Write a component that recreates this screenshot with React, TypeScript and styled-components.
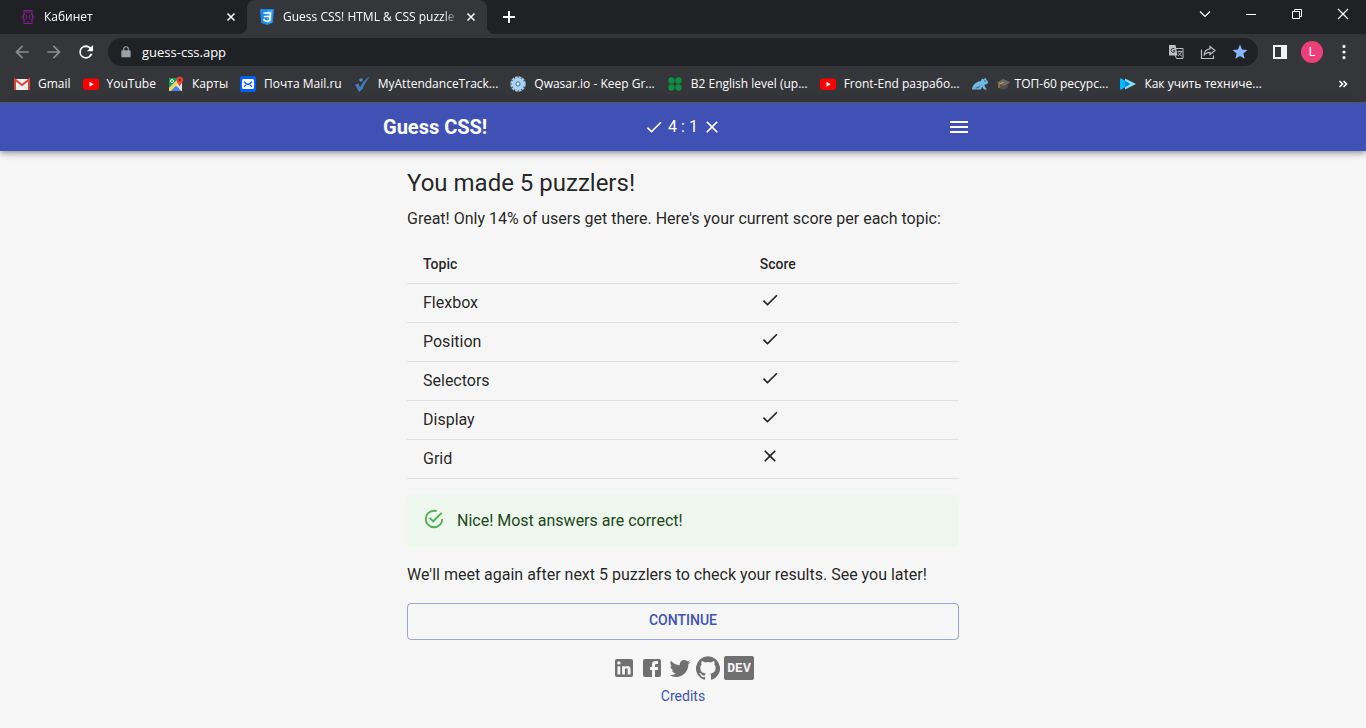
import React from 'react';
import styled, { createGlobalStyle } from 'styled-components';

const uiFont = '"Open Sans", "Noto Sans", sans-serif';
const tabStrip = '#202124';
const chrome = '#35363a';
const primary = '#3f51b5';

const GlobalStyle = createGlobalStyle`
  *, *::before, *::after { box-sizing: border-box; }
  body {
    margin: 0;
    background: #f6f6f6;
    color: rgba(0, 0, 0, 0.87);
    font-family: Roboto, sans-serif;
    font-size: 16px;
    line-height: 24px;
  }
  svg { display: block; flex: none; }
  button { font-family: inherit; cursor: pointer; }
`;

/* ---------- browser frame ---------- */

const BrowserFrame = styled.div`
  background: ${chrome};
  color: #fff;
  font-family: ${uiFont};
  font-size: 12px;
  line-height: 16px;
  border-bottom: 1px solid #5c5d60;
`;

const TabStrip = styled.div`
  display: flex;
  height: 34px;
  padding-left: 7px;
  background: ${tabStrip};
`;

const Tab = styled.div<{ $active?: boolean }>`
  position: relative;
  display: flex;
  align-items: center;
  gap: 8px;
  width: 240px;
  padding: 0 8px 0 12px;
  border-radius: 8px 8px 0 0;
  background: ${(p) => (p.$active ? chrome : 'transparent')};

  &::before,
  &::after {
    content: ${(p) => (p.$active ? '""' : 'none')};
    position: absolute;
    bottom: 0;
    width: 8px;
    height: 8px;
  }
  &::before {
    left: -8px;
    background: radial-gradient(circle at 0 0, transparent 8px, ${chrome} 8px);
  }
  &::after {
    right: -8px;
    background: radial-gradient(circle at 100% 0, transparent 8px, ${chrome} 8px);
  }
`;

const TabTitle = styled.span`
  flex: 1;
  overflow: hidden;
  white-space: nowrap;
  mask-image: linear-gradient(to right, #000 160px, transparent 176px);
`;

const GlyphButton = styled.button<{ $size?: number }>`
  display: flex;
  align-items: center;
  justify-content: center;
  flex: none;
  width: ${(p) => p.$size ?? 32}px;
  height: ${(p) => p.$size ?? 32}px;
  padding: 0;
  border: 0;
  background: none;
  color: inherit;
`;

const NavButton = styled(GlyphButton)<{ $dim?: boolean }>`
  color: ${(p) => (p.$dim ? '#8b8c8f' : '#fff')};
`;

const StarButton = styled(GlyphButton)`
  color: #8ab4f8;
`;

const NewTab = styled(GlyphButton)`
  margin: 3px 0 0 8px;
`;

const WindowControls = styled.div`
  display: flex;
  margin-left: auto;
`;

const WindowButton = styled(GlyphButton)`
  width: 46px;
  height: 28px;
`;

const Toolbar = styled.div`
  display: flex;
  align-items: center;
  height: 36px;
  padding: 0 6px;
`;

const AddressBar = styled.div`
  display: flex;
  flex: 1;
  align-items: center;
  height: 28px;
  margin: 0 6px;
  padding: 0 2px 0 11px;
  border-radius: 14px;
  background: ${tabStrip};
  color: #9aa0a6;
`;

const AddressInput = styled.input`
  flex: 1;
  min-width: 0;
  padding: 0 0 0 9px;
  border: 0;
  outline: 0;
  background: none;
  color: #fff;
  font-family: ${uiFont};
  font-size: 13px;
`;

const Avatar = styled.span`
  width: 22px;
  height: 22px;
  border-radius: 50%;
  background: #ec407a;
  color: #fff;
  font-family: Roboto, sans-serif;
  font-size: 12px;
  line-height: 22px;
  text-align: center;
`;

const Bookmarks = styled.nav`
  display: flex;
  align-items: center;
  gap: 12px;
  height: 32px;
  padding: 0 15px 4px 14px;
`;

const Bookmark = styled.a`
  display: flex;
  align-items: center;
  gap: 8px;
  color: #fff;
  text-decoration: none;
  white-space: nowrap;
`;

const BookmarkLabel = styled.span`
  display: flex;
  align-items: center;
  gap: 4px;
`;

const MoreButton = styled(GlyphButton)`
  margin-left: auto;
`;

/* ---------- page ---------- */

const AppBar = styled.header`
  position: relative;
  background: ${primary};
  color: #fff;
  box-shadow: 0 2px 4px -1px rgba(0, 0, 0, 0.2), 0 4px 5px 0 rgba(0, 0, 0, 0.14),
    0 1px 10px 0 rgba(0, 0, 0, 0.12);
`;

const AppBarInner = styled.div`
  display: grid;
  grid-template-columns: 1fr auto 1fr;
  align-items: center;
  max-width: 600px;
  height: 48px;
  margin: 0 auto;
`;

const Brand = styled.span`
  font-size: 20px;
  font-weight: 700;
`;

const ScoreTotal = styled.span`
  display: flex;
  align-items: center;
  gap: 4px;
`;

const MenuButton = styled(GlyphButton)`
  justify-self: end;
`;

const Content = styled.main`
  max-width: 600px;
  margin: 0 auto;
  padding: 16px 24px;
`;

const Heading = styled.h1`
  margin: 0 0 8px;
  font-size: 24px;
  font-weight: 400;
  line-height: 32px;
`;

const Text = styled.p`
  margin: 0 0 16px;
`;

const ScoreTable = styled.table`
  width: 100%;
  margin-bottom: 16px;
  border-collapse: separate;
  border-spacing: 0;
  table-layout: fixed;
`;

const HeadCell = styled.th<{ $wide?: boolean }>`
  width: ${(p) => (p.$wide ? '61%' : 'auto')};
  height: 37px;
  padding: 0 16px 2px;
  border-bottom: 1px solid #e0e0e0;
  font-size: 14px;
  font-weight: 500;
  text-align: left;
`;

const Cell = styled.td<{ $top?: boolean }>`
  height: 39px;
  padding: ${(p) => (p.$top ? '6px 16px' : '0 16px')};
  border-bottom: 1px solid #e0e0e0;
  vertical-align: ${(p) => (p.$top ? 'top' : 'middle')};
`;

const Alert = styled.div`
  display: flex;
  gap: 12px;
  margin-bottom: 16px;
  padding: 14px 16px;
  border-radius: 4px;
  background: #edf7ed;
  color: #1e4620;

  svg { color: #4caf50; margin-top: -1px; }
`;

const ContinueButton = styled.button`
  display: block;
  width: 100%;
  height: 37px;
  margin-bottom: 16px;
  padding: 0 16px 4px;
  border: 1px solid rgba(63, 81, 181, 0.5);
  border-radius: 4px;
  background: none;
  color: ${primary};
  font-size: 14px;
  font-weight: 500;
  text-transform: uppercase;
`;

const Footer = styled.footer`
  display: flex;
  flex-direction: column;
  align-items: center;
  gap: 6px;
  font-size: 14px;
  line-height: 20px;
`;

const Socials = styled.div`
  display: flex;
  gap: 4px;
`;

const SocialLink = styled.a`
  color: #707070;
  text-decoration: none;
`;

const DevBadge = styled(SocialLink)`
  width: 30px;
  height: 24px;
  border-radius: 2px;
  background: #707070;
  color: #f6f6f6;
  font-family: "Liberation Mono", monospace;
  font-size: 13px;
  font-weight: 700;
  line-height: 26px;
  text-align: center;
`;

const CreditsLink = styled.a`
  color: ${primary};
  text-decoration: none;
`;

/* ---------- icons ---------- */

const Icon = ({ d, size = 24 }: { d: string; size?: number }) => (
  <svg width={size} height={size} viewBox="0 0 24 24" fill="currentColor" aria-hidden="true">
    <path d={d} />
  </svg>
);

const paths = {
  check: 'M9 16.17L4.83 12l-1.42 1.41L9 19 21 7l-1.41-1.41z',
  close:
    'M19 6.41L17.59 5 12 10.59 6.41 5 5 6.41 10.59 12 5 17.59 6.41 19 12 13.41 17.59 19 19 17.59 13.41 12z',
  menu: 'M3 18h18v-2H3v2zm0-5h18v-2H3v2zm0-7v2h18V6H3z',
  success:
    'M20,12A8,8 0 0,1 12,20A8,8 0 0,1 4,12A8,8 0 0,1 12,4C12.76,4 13.5,4.11 14.2,4.31L15.77,2.74C14.61,2.26 13.34,2 12,2A10,10 0 0,0 2,12A10,10 0 0,0 12,22A10,10 0 0,0 22,12M7.91,10.08L6.5,11.5L11,16L21,6L19.59,4.58L11,13.17L7.91,10.08Z',
  back: 'M20 11H7.83l5.59-5.59L12 4l-8 8 8 8 1.41-1.41L7.83 13H20v-2z',
  forward: 'M12 4l-1.41 1.41L16.17 11H4v2h12.17l-5.58 5.59L12 20l8-8z',
  reload:
    'M17.65 6.35A7.95 7.95 0 0 0 12 4a8 8 0 1 0 7.73 10h-2.6A5.8 5.8 0 1 1 12 6.2c1.66 0 3.1.69 4.15 1.75L13 11h7.5V3.5z',
  lock: 'M18.500 9H17V7A5 5 0 0 0 7 7v2H5.500C4.700 9 4 9.700 4 10.500v9c0 .8.7 1.500 1.500 1.500h13c.8 0 1.500-.7 1.500-1.500v-9c0-.8-.7-1.500-1.500-1.500zM9 9V7a3 3 0 0 1 6 0v2z',
  star: 'M12 17.27L18.18 21l-1.64-7.03L22 9.24l-7.19-.61L12 2 9.19 8.63 2 9.24l5.46 4.73L5.82 21z',
  dots: 'M12 6.100a2.400 2.400 0 1 0 0-4.800 2.400 2.400 0 0 0 0 4.800zm0 8.300a2.400 2.400 0 1 0 0-4.800 2.400 2.400 0 0 0 0 4.800zm0 8.300a2.400 2.400 0 1 0 0-4.800 2.400 2.400 0 0 0 0 4.800z',
  linkedin:
    'M19 3a2 2 0 0 1 2 2v14a2 2 0 0 1-2 2H5a2 2 0 0 1-2-2V5a2 2 0 0 1 2-2h14m-.5 15.5v-5.3a3.26 3.26 0 0 0-3.26-3.26c-.85 0-1.84.52-2.32 1.3v-1.110h-2.790v8.370h2.790v-4.930c0-.77.62-1.4 1.390-1.4a1.4 1.4 0 0 1 1.4 1.4v4.930h2.790M6.880 8.560a1.680 1.680 0 0 0 1.680-1.680c0-.93-.75-1.690-1.680-1.690a1.690 1.690 0 0 0-1.690 1.690c0 .93.76 1.680 1.690 1.680m1.390 9.940v-8.370H5.500v8.370h2.770z',
  facebook:
    'M5 3h14a2 2 0 0 1 2 2v14a2 2 0 0 1-2 2H5a2 2 0 0 1-2-2V5a2 2 0 0 1 2-2m13 2h-2.500A3.500 3.500 0 0 0 12 8.500V11h-2v3h2v7h3v-7h3v-3h-3V9a1 1 0 0 1 1-1h2V5z',
  twitter:
    'M22.46 6c-.77.35-1.6.58-2.46.69.88-.53 1.56-1.37 1.88-2.38-.83.5-1.75.85-2.72 1.05C18.37 4.5 17.26 4 16 4c-2.35 0-4.27 1.92-4.27 4.29 0 .34.04.67.11.98C8.28 9.09 5.11 7.38 3 4.79c-.37.63-.58 1.37-.58 2.15 0 1.49.75 2.81 1.91 3.56-.71 0-1.37-.2-1.95-.5v.03c0 2.08 1.48 3.82 3.44 4.21a4.22 4.22 0 0 1-1.93.07 4.28 4.28 0 0 0 4 2.98 8.521 8.521 0 0 1-5.33 1.84c-.34 0-.68-.02-1.02-.06C3.44 20.29 5.7 21 8.12 21 16 21 20.33 14.46 20.33 8.79c0-.19 0-.37-.01-.56.84-.6 1.56-1.36 2.14-2.23z',
  github:
    'M12 .3a12 12 0 0 0-3.8 23.4c.6.1.8-.3.8-.6v-2c-3.3.7-4-1.6-4-1.6-.6-1.4-1.4-1.8-1.4-1.8-1-.7.1-.7.1-.7 1.2 0 1.9 1.2 1.9 1.2 1 1.8 2.8 1.3 3.5 1 0-.8.4-1.3.7-1.6-2.7-.3-5.5-1.3-5.5-6 0-1.2.5-2.3 1.3-3.1-.2-.4-.6-1.6 0-3.2 0 0 1-.3 3.4 1.2a11.5 11.5 0 0 1 6 0c2.3-1.5 3.3-1.2 3.3-1.2.6 1.6.2 2.8 0 3.2.9.8 1.3 1.9 1.3 3.2 0 4.6-2.8 5.6-5.5 5.9.5.4.9 1 .9 2.2v3.3c0 .3.1.7.8.6A12 12 0 0 0 12 .3',
};

const Svg16 = ({ children }: { children: React.ReactNode }) => (
  <svg width="16" height="16" viewBox="0 0 16 16" fill="none" aria-hidden="true">
    {children}
  </svg>
);

const CabinetIcon = () => (
  <svg width="17" height="16" viewBox="0 0 17 16" fill="none" aria-hidden="true">
    <path
      d="M5 5V1.500h8V5M5 11v3.500h8V11M7 1.500v1.500h4V1.500M7.500 13h3M6.500 5.500H4.500V7.500L3.300 8l1.200.5v2h2M11.500 5.500h2V7.500l1.200.5-1.200.5v2h-2M7.500 6v4M10.500 6v4"
      stroke="#7b1f8a"
      strokeWidth="1.200"
    />
  </svg>
);

const Css3Icon = () => (
  <Svg16>
    <path d="M1 0h14l-1.200 14L8 16l-5.800-2z" fill="#1e88e5" />
    <path d="M8 1.200h5.700l-1 12L8 14.800z" fill="#42a5f5" />
    <path d="M4.500 4h7l-.7 7.500L8 12.500l-2.700-1-.1-1.700M4.800 7.500h6" stroke="#fff" strokeWidth="1.600" />
  </Svg16>
);

const GmailIcon = () => (
  <Svg16>
    <path d="M1 3h14v11H1z" fill="#f1f1f1" />
    <path d="M1 14V3.500L8 9l7-5.500V14" stroke="#db4437" strokeWidth="2" />
    <path d="M2.500 14L7 9M13.500 14L9 9" stroke="#ccc" strokeWidth=".7" />
  </Svg16>
);

const YouTubeIcon = () => (
  <Svg16>
    <rect y="2.500" width="16" height="11.500" rx="3" fill="#f00" />
    <path d="M6.500 5.700v5l4.200-2.500z" fill="#fff" />
  </Svg16>
);

const MapsIcon = () => (
  <Svg16>
    <path d="M1 2h13v13H1z" fill="#e8eaed" />
    <path d="M1 2h10L1 12z" fill="#109d58" />
    <path d="M2.500 15L8 9.500l5.500 5.500z" fill="#4285f4" />
    <path d="M1 12.500L9.500 4l1.500 2.500L2.500 15H1z" fill="#ffd54f" />
    <circle cx="4" cy="5" r="1.500" stroke="#fff" />
    <path d="M11.500 11C11 8 8.500 7 8.500 4a3.300 3.300 0 0 1 6.600 0c0 3-3 4-3.600 7z" fill="#ea4335" />
    <circle cx="11.800" cy="4" r="1.200" fill="#8c1d14" />
  </Svg16>
);

const MailIcon = () => (
  <Svg16>
    <rect width="16" height="16" rx="2" fill="#005ff9" />
    <rect x="2" y="3" width="12" height="10" rx="1.500" fill="#fff" />
    <path d="M4 5.800L7 8.300h2l3-2.500M4 10.800l2-1.800M12 10.800L10 9" stroke="#005ff9" strokeWidth="1.400" />
  </Svg16>
);

const AttendanceIcon = () => (
  <Svg16>
    <path d="M1 8.500l3.500-1 1.500 4C8 7 11 3 16 .5 12 5 9.500 10 8.500 13L5 16z" fill="#3f7fbf" />
    <circle cx="7" cy="4" r="1.800" fill="#4a8cc8" />
  </Svg16>
);

const QwasarIcon = () => (
  <Svg16>
    <circle cx="8" cy="8" r="6.800" stroke="#9bc4e6" strokeWidth="2" strokeDasharray="2.800 .8" />
    <circle cx="8" cy="8" r="4.300" stroke="#a9d4f5" strokeWidth="3.800" />
    <circle cx="8" cy="8" r="2" stroke="#5aa6e0" strokeWidth="1" />
    <circle cx="8" cy="8" r="1.400" fill="#eef7ff" />
  </Svg16>
);

const CloverIcon = () => (
  <Svg16>
    <g fill="#0a8f43">
      <circle cx="4.500" cy="4.500" r="3.200" />
      <circle cx="11.500" cy="4.500" r="3.200" />
      <circle cx="4.500" cy="11.500" r="3.200" />
      <circle cx="11.500" cy="11.500" r="3.200" />
    </g>
  </Svg16>
);

const FrogIcon = () => (
  <Svg16>
    <path
      d="M0 13.500c.5-4.500 4-8 9-8.500.2-2.500 2-3 2.700-1.600 1-1.800 2.800-1.200 2.800.6 1.500.6 1.800 2.600 1 3.600-1 .8-2.300.8-3.200 1.200l1.200 3 1.500 1.700h-3L10 10.500l-1 3z"
      fill="#6fb9e8"
    />
    <path d="M3.500 12c2 0 3.500-.7 4.500-2.500" stroke="#35363a" strokeWidth=".8" />
    <circle cx="13" cy="5" r=".7" fill="#35363a" />
  </Svg16>
);

const CapIcon = () => (
  <svg width="15" height="16" viewBox="0 0 15 16" fill="none" aria-hidden="true">
    <path d="M3.500 7v5c2 1.800 6 1.800 8 0V7z" fill="#50504e" />
    <path d="M7.500 3L14.500 6.500l-7 3.500-7-3.500z" fill="#6a6a66" />
    <path d="M7.500 6.500L3 8v4" stroke="#e0a030" />
  </svg>
);

const ChevronsIcon = () => (
  <Svg16>
    <path d="M5 2.500L16 8 5 13.500z" fill="#7fe0ff" />
    <path d="M0 2.500h1.500L10 8l-8.500 5.500H0z" fill="#00b8ff" />
    <path d="M5 4.800L10 8l-5 3.200z" fill="#0a84d8" />
  </Svg16>
);

const TranslateIcon = () => (
  <Svg16>
    <path d="M7 4.500h8v10H8.500L7 11" stroke="#bdc1c6" />
    <path d="M1 1h6.500l2 10.500H1z" fill="#bdc1c6" />
    <path d="M6.500 5A2 2 0 1 0 7 6.800H5" stroke="#35363a" />
    <path d="M9.500 7.500h5M12 6.500v1M13.500 7.500c-.5 2-2 3.500-3.500 4.500M10.500 8.500c1 2 2 3 3.500 3.800" stroke="#bdc1c6" strokeWidth=".9" />
  </Svg16>
);

const ShareIcon = () => (
  <Svg16>
    <path d="M1.500 5.500v9h12v-3" stroke="#bdc1c6" strokeWidth="1.200" />
    <path d="M10 2.500l5 4-5 4V8.300c-3 0-4.800 1-6 3.200.3-4 2.500-6.300 6-6.600z" stroke="#bdc1c6" strokeWidth="1.200" />
  </Svg16>
);

const SidePanelIcon = () => (
  <Svg16>
    <path d="M1 1h14v14H1zM3 3v10h6V3z" fill="#f1f3f4" fillRule="evenodd" />
  </Svg16>
);

const CloseTabIcon = () => (
  <Svg16>
    <path d="M4.500 4.500l7 7M11.500 4.500l-7 7" stroke="#fff" strokeWidth="1.600" />
  </Svg16>
);

/* ---------- data ---------- */

const bookmarks = [
  { label: 'Gmail', icon: <GmailIcon /> },
  { label: 'YouTube', icon: <YouTubeIcon /> },
  { label: 'Карты', icon: <MapsIcon /> },
  { label: 'Почта Mail.ru', icon: <MailIcon /> },
  { label: 'MyAttendanceTrack...', icon: <AttendanceIcon /> },
  { label: 'Qwasar.io - Keep Gr...', icon: <QwasarIcon /> },
  { label: 'B2 English level (up...', icon: <CloverIcon /> },
  { label: 'Front-End разрабо...', icon: <YouTubeIcon /> },
  { label: 'ТОП-60 ресурс...', icon: <FrogIcon />, prefix: <CapIcon /> },
  { label: 'Как учить техниче...', icon: <ChevronsIcon /> },
];

const topics = [
  { name: 'Flexbox', correct: true },
  { name: 'Position', correct: true },
  { name: 'Selectors', correct: true },
  { name: 'Display', correct: true },
  { name: 'Grid', correct: false },
];

const socials = [
  { name: 'LinkedIn', d: paths.linkedin },
  { name: 'Facebook', d: paths.facebook },
  { name: 'Twitter', d: paths.twitter },
  { name: 'GitHub', d: paths.github },
];

const Browser = () => (
  <BrowserFrame>
    <TabStrip>
      <Tab>
        <CabinetIcon />
        <TabTitle>Кабинет</TabTitle>
        <GlyphButton $size={16} aria-label="Close tab"><CloseTabIcon /></GlyphButton>
      </Tab>
      <Tab $active>
        <Css3Icon />
        <TabTitle>Guess CSS! HTML &amp; CSS puzzler game</TabTitle>
        <GlyphButton $size={16} aria-label="Close tab"><CloseTabIcon /></GlyphButton>
      </Tab>
      <NewTab $size={28} aria-label="New tab">
        <Svg16><path d="M8 2v12M2 8h12" stroke="#fff" strokeWidth="2" /></Svg16>
      </NewTab>
      <WindowControls>
        <WindowButton aria-label="Search tabs">
          <Svg16><path d="M3 5.500l5 5 5-5" stroke="#fff" strokeWidth="1.200" /></Svg16>
        </WindowButton>
        <WindowButton aria-label="Minimize">
          <Svg16><path d="M3 8.500h10" stroke="#fff" /></Svg16>
        </WindowButton>
        <WindowButton aria-label="Restore">
          <Svg16><path d="M3.500 5.500h7v7h-7zM5.500 5.500v-2h7v7h-2" stroke="#fff" /></Svg16>
        </WindowButton>
        <WindowButton aria-label="Close">
          <Svg16><path d="M3 3l10 10M13 3L3 13" stroke="#fff" strokeWidth="1.200" /></Svg16>
        </WindowButton>
      </WindowControls>
    </TabStrip>
    <Toolbar>
      <NavButton $dim aria-label="Back"><Icon d={paths.back} size={20} /></NavButton>
      <NavButton $dim aria-label="Forward"><Icon d={paths.forward} size={20} /></NavButton>
      <NavButton aria-label="Reload"><Icon d={paths.reload} size={20} /></NavButton>
      <AddressBar>
        <Icon d={paths.lock} size={14} />
        <AddressInput aria-label="Address" defaultValue="guess-css.app" />
        <GlyphButton aria-label="Translate"><TranslateIcon /></GlyphButton>
        <GlyphButton aria-label="Share"><ShareIcon /></GlyphButton>
        <StarButton aria-label="Bookmark this page"><Icon d={paths.star} size={18} /></StarButton>
      </AddressBar>
      <GlyphButton aria-label="Side panel"><SidePanelIcon /></GlyphButton>
      <GlyphButton aria-label="Profile"><Avatar>L</Avatar></GlyphButton>
      <GlyphButton aria-label="Browser menu"><Icon d={paths.dots} size={16} /></GlyphButton>
    </Toolbar>
    <Bookmarks>
      {bookmarks.map((b) => (
        <Bookmark key={b.label} href="#">
          {b.icon}
          <BookmarkLabel>{b.prefix}{b.label}</BookmarkLabel>
        </Bookmark>
      ))}
      <MoreButton $size={16} aria-label="More bookmarks">
        <Svg16><path d="M4.500 5l3 3-3 3M8.500 5l3 3-3 3" stroke="#fff" strokeWidth="1.600" /></Svg16>
      </MoreButton>
    </Bookmarks>
  </BrowserFrame>
);

export default function App() {
  return (
    <>
      <GlobalStyle />
      <Browser />
      <AppBar>
        <AppBarInner>
          <Brand>Guess CSS!</Brand>
          <ScoreTotal>
            <Icon d={paths.check} size={20} />
            4 : 1
            <Icon d={paths.close} size={20} />
          </ScoreTotal>
          <MenuButton $size={48} aria-label="Menu"><Icon d={paths.menu} /></MenuButton>
        </AppBarInner>
      </AppBar>
      <Content>
        <Heading>You made 5 puzzlers!</Heading>
        <Text>Great! Only 14% of users get there. Here's your current score per each topic:</Text>
        <ScoreTable>
          <thead>
            <tr>
              <HeadCell $wide scope="col">Topic</HeadCell>
              <HeadCell scope="col">Score</HeadCell>
            </tr>
          </thead>
          <tbody>
            {topics.map((t) => (
              <tr key={t.name}>
                <Cell>{t.name}</Cell>
                <Cell $top><Icon d={t.correct ? paths.check : paths.close} size={20} /></Cell>
              </tr>
            ))}
          </tbody>
        </ScoreTable>
        <Alert role="alert">
          <Icon d={paths.success} size={22} />
          Nice! Most answers are correct!
        </Alert>
        <Text>We'll meet again after next 5 puzzlers to check your results. See you later!</Text>
        <ContinueButton type="button">Continue</ContinueButton>
        <Footer>
          <Socials>
            {socials.map((s) => (
              <SocialLink key={s.name} href="#" aria-label={s.name}><Icon d={s.d} /></SocialLink>
            ))}
            <DevBadge href="#">DEV</DevBadge>
          </Socials>
          <CreditsLink href="#">Credits</CreditsLink>
        </Footer>
      </Content>
    </>
  );
}
